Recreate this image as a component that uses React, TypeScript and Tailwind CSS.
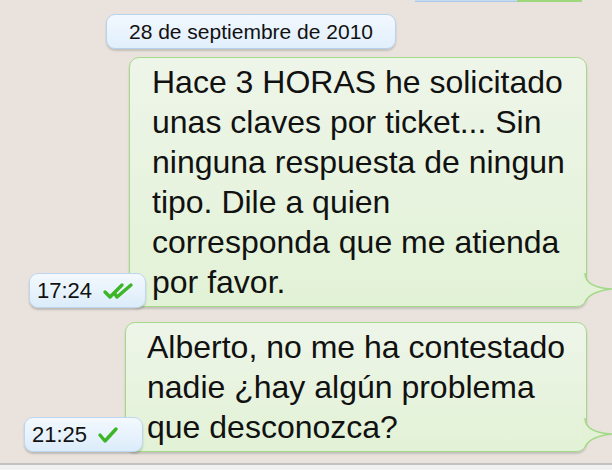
import React from 'react';

const font = { fontFamily: '"Liberation Sans", Arial, Helvetica, sans-serif' };

function Checks({ double }: { double?: boolean }) {
  return (
    <svg width={double ? 32 : 22} height="18" viewBox={double ? '0 0 32 18' : '0 0 22 18'}>
      {double && (
        <path d="M3 10 L8 15 L20 3" fill="none" stroke="#3cb527" strokeWidth="3.4" strokeLinecap="round" strokeLinejoin="round" />
      )}
      <path
        d={double ? 'M13 12 L15 15 L29 3' : 'M3 9 L8 15 L19 3'}
        fill="none"
        stroke="#3cb527"
        strokeWidth="3.4"
        strokeLinecap="round"
        strokeLinejoin="round"
      />
    </svg>
  );
}

function Tail() {
  return (
    <svg width="30" height="32" viewBox="0 0 30 32" className="absolute left-[calc(100%-3px)] bottom-[1px]" style={{ overflow: 'visible' }}>
      <path d="M-1 0 H2 C2 9 10 15 29 16 C14 18 6 21 2 29 H-1 Z" fill="#e3f2d7" />
      <path d="M2 0 C2 9 10 15 29 16 C14 18 6 21 2 29" fill="none" stroke="#a5d98a" strokeWidth="1.5" />
    </svg>
  );
}

function Stamp({ time, double, className }: { time: string; double?: boolean; className: string }) {
  return (
    <div
      className={`absolute z-10 flex items-center h-[35px] rounded-[9px] border border-[#bcd7ee] bg-gradient-to-b from-[#f3f9fe] to-[#dcecfa] shadow-[0_2px_2px_rgba(0,0,0,0.18)] pl-[7px] gap-[10px] text-[22px] text-[#111] ${className}`}
    >
      <span>{time}</span>
      <Checks double={double} />
    </div>
  );
}

function Bubble({ lines, className, children }: { lines: string[]; className: string; children?: React.ReactNode }) {
  return (
    <div
      className={`relative rounded-[10px] border border-[#a5d98a] bg-gradient-to-b from-[#eef5e9] to-[#e2f2d6] shadow-[0_2px_2px_rgba(0,0,0,0.15)] py-[4px] text-[32px] leading-[40px] text-[#111] ${className}`}
    >
      {lines.map((l) => (
        <div key={l} className="whitespace-nowrap">
          {l}
        </div>
      ))}
      <Tail />
      {children}
    </div>
  );
}

export default function App() {
  return (
    <div className="w-[612px] h-[470px] bg-[#e9e2dd] overflow-hidden flex flex-col" style={font}>
      <div className="flex h-[2px] ml-[415px]">
        <div className="w-[102px] bg-[#c3dcf0] border-b border-[#a9c9e6]" />
        <div className="w-[65px] bg-[#9fd77c]" />
      </div>

      <div className="mt-[12px] ml-[106px] w-[290px] h-[35px] rounded-[9px] border border-[#b6d3ee] bg-gradient-to-b from-[#f2f8fe] to-[#e1effc] shadow-[0_2px_2px_rgba(0,0,0,0.15)] flex items-center justify-center text-[21px] text-[#111]">
        28 de septiembre de 2010
      </div>

      <Bubble
        className="mt-[8px] ml-[129px] w-[458px] pl-[22px]"
        lines={[
          'Hace 3 HORAS he solicitado',
          'unas claves por ticket... Sin',
          'ninguna respuesta de ningun',
          'tipo. Dile a quien',
          'corresponda que me atienda',
          'por favor.',
        ]}
      >
        <Stamp time="17:24" double className="left-[-101px] top-[215px] w-[117px]" />
      </Bubble>

      <Bubble
        className="mt-[15px] ml-[125px] w-[462px] pl-[21px]"
        lines={['Alberto, no me ha contestado', 'nadie ¿hay algún problema', 'que desconozca?']}
      >
        <Stamp time="21:25" className="left-[-102px] top-[94px] w-[119px]" />
      </Bubble>

      <div className="mt-auto h-[7px] border-t-2 border-[#c4c2c0] bg-[#f1f1f1]" />
    </div>
  );
}
